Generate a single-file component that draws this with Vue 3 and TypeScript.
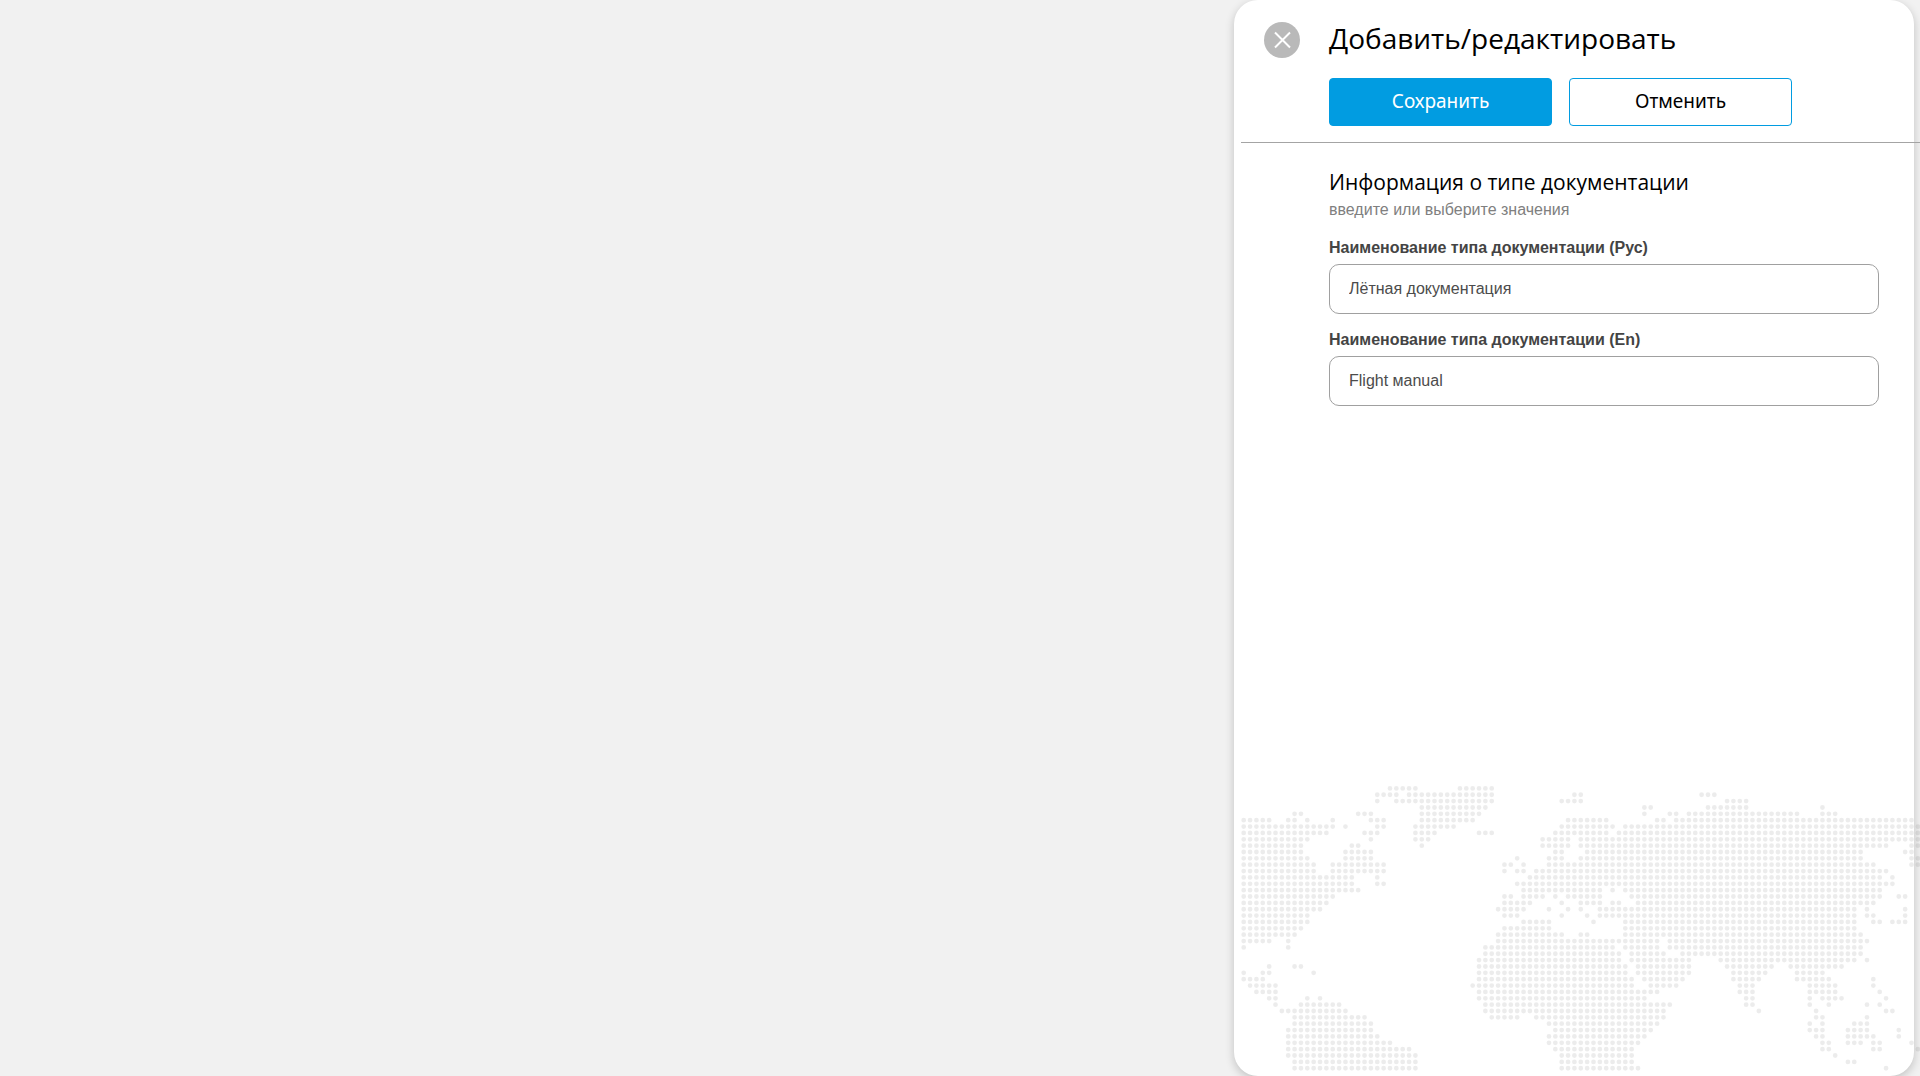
<script setup lang="ts">
import { ref } from 'vue'

const nameRu = ref<string>('Лётная документация')
const nameEn = ref<string>('Flight мanual')

// Dotted world map: each row lists the runs of filled columns.
const mapRows: string[] = [
  '23-27 34-39',
  '21-24 26-39 52-53 72-74',
  '21 24-39 50-53 76-79',
  '28-38 63-64 73-79 91',
  '8-9 18-20 28-37 63 67-68 70-87 91-93',
  '0-4 7-8 10 14 20-22 28-36 51-57 65-66 68-105',
  '0-14 16 21-22 27-33 50-58 60-106',
  '0-13 19-21 27-30 37-39 49-57 59-106',
  '0-10 20 27-29 47-51 53-106',
  '0-9 17-18 28 47-51 53-101 105-106',
  '0-9 16-20 49-50 54-97 104-105',
  '0-10 16-20 43 48-50 53-97 105-106',
  '0-11 14-22 41-42 44 48-99 105-106',
  '0-11 14-22 41 43-44 46-101',
  '0-17 21 45-100 102',
  '0-17 21-22 43-102',
  '0-18 44-56 58 60-100',
  '0-14 41-42 44-47 49 51-56 61-100 103-104',
  '0-13 41-45 50 53-56 58-59 62-99',
  '0-12 40-44 48 51 53 56-96 98 104',
  '0-10 41-43 50 54 56-96 98-99 104',
  '0-10 44-48 55 60-96 99-100 102-104',
  '0-9 41-48 60-96',
  '0-8 40-50 53-54 60-97',
  '0-4 7 40-65 67-98',
  '0 7 38-58 60-65 67-97',
  '38-59 61-66 69-97',
  '37-59 61-70 75-96 98',
  '4 8-9 37-60 62-70 76-83 86-94',
  '0 3-4 11 37-60 62-70 77-82 87-91',
  '0-3 37-61 63-69 77-81 87-92 99',
  '1-5 36-61 64-68 78-80 89-93 99',
  '2-5 37-65 78-80 89-93 100',
  '4-5 10 12 37-63 79-80 89 91-94 101',
  '5 9-15 38-67 79-80 89 92 98 100',
  '6-16 38-66 81 90 101-102',
  '8-19 39-43 46-66 90-91 98',
  '8-20 48-65 89 91 96-98',
  '7-20 49-64 89-91 95-98 103',
  '7-21 48-63 90-91 95-99 103',
  '7-23 48-62 91-92 95-97 99-100 105',
  '7-26 49-61 91-92 99-100 106',
  '7-27 50-61 93',
  '8-27 50-61 95-96',
  '8-27 50-62 101',
]

const pitch = 6.36

const mapPath: string = mapRows
  .map((row, r) =>
    row
      .split(' ')
      .map((run) => {
        const [from, to] = run.split('-').map(Number)
        let d = ''
        for (let c = from; c <= (to ?? from); c++) {
          d += `M${(2.7 + c * pitch).toFixed(2)} ${(4.4 + r * pitch).toFixed(2)}h0`
        }
        return d
      })
      .join(''),
  )
  .join('')
</script>

<template>
  <main class="page">
    <form class="panel" @submit.prevent>
      <header class="head">
        <button class="close" type="button" aria-label="Закрыть">
          <svg viewBox="0 0 36 36" width="36" height="36" aria-hidden="true">
            <path d="M11 10.500L26 25.500M26 10.500L11 25.500" />
          </svg>
        </button>
        <div class="head-main">
          <h1>Добавить/редактировать</h1>
          <div class="actions">
            <button class="btn primary" type="submit">Сохранить</button>
            <button class="btn" type="button">Отменить</button>
          </div>
        </div>
      </header>
      <section class="body">
        <h2>Информация о типе документации</h2>
        <p class="hint">введите или выберите значения</p>
        <div class="field">
          <label for="name-ru">Наименование типа документации (Рус)</label>
          <input id="name-ru" v-model="nameRu" type="text" />
        </div>
        <div class="field">
          <label for="name-en">Наименование типа документации (En)</label>
          <input id="name-en" v-model="nameEn" type="text" />
        </div>
      </section>
      <svg class="map" viewBox="0 0 679 292" aria-hidden="true">
        <path :d="mapPath" />
      </svg>
    </form>
  </main>
</template>

<style>
body {
  background: #f1f1f1;
}
</style>

<style scoped>
.page {
  display: flex;
  justify-content: flex-end;
  min-height: 100vh;
  padding-right: 6px;
  box-sizing: border-box;
  overflow: hidden;
  font-family: "Open Sans", "Noto Sans", sans-serif;
  color: #000;
}
.panel {
  display: flex;
  flex-direction: column;
  flex: 0 1 680px;
  box-sizing: border-box;
  padding-left: 7px;
  border-radius: 24px;
  background: #fff;
  box-shadow: 0 3px 10px rgba(0, 0, 0, 0.2);
}
.head {
  display: flex;
  gap: 29px;
  margin-right: -6px;
  padding: 17px 0 16px 23px;
  border-bottom: 1px solid #a4a4a4;
}
.close {
  width: 36px;
  height: 36px;
  margin: 5px 0 0;
  padding: 0;
  border: 0;
  border-radius: 50%;
  background: #b9b9b9;
}
.close svg {
  display: block;
}
.close path {
  fill: none;
  stroke: #fff;
  stroke-width: 2;
}
.head-main {
  flex: 1;
}
h1 {
  margin: 0;
  font-size: 28px;
  line-height: 42px;
  font-weight: 400;
}
.actions {
  display: flex;
  gap: 17px;
  margin-top: 19px;
}
.btn {
  width: 223px;
  height: 48px;
  padding: 0 0 2px;
  border: 1px solid #019ce1;
  border-radius: 4px;
  background: #fff;
  color: #000;
  font: 400 19px/24px "Noto Sans", sans-serif;
}
.primary {
  background: #019ce1;
  color: #fff;
}
.body {
  padding: 23px 35px 0 88px;
}
h2 {
  margin: 0;
  font-size: 21px;
  line-height: 32px;
  font-weight: 400;
}
.hint {
  margin: 0 0 14px;
  font-family: "Liberation Sans", sans-serif;
  font-size: 16px;
  line-height: 24px;
  color: #808080;
}
.field {
  display: flex;
  flex-direction: column;
  margin-bottom: 14px;
}
label {
  margin-bottom: 4px;
  font-family: "Liberation Sans", sans-serif;
  font-size: 16px;
  line-height: 24px;
  font-weight: 700;
  color: #444;
}
input {
  height: 50px;
  box-sizing: border-box;
  padding: 0 19px;
  border: 1px solid #a0a0a0;
  border-radius: 10px;
  background: #fff;
  color: #4c4c4c;
  font: 400 16px/24px "Liberation Sans", sans-serif;
}
.map {
  display: block;
  margin: auto -6px 0 0;
}
.map path {
  fill: none;
  stroke: rgba(0, 0, 0, 0.075);
  stroke-width: 4.8;
  stroke-linecap: round;
}
</style>
